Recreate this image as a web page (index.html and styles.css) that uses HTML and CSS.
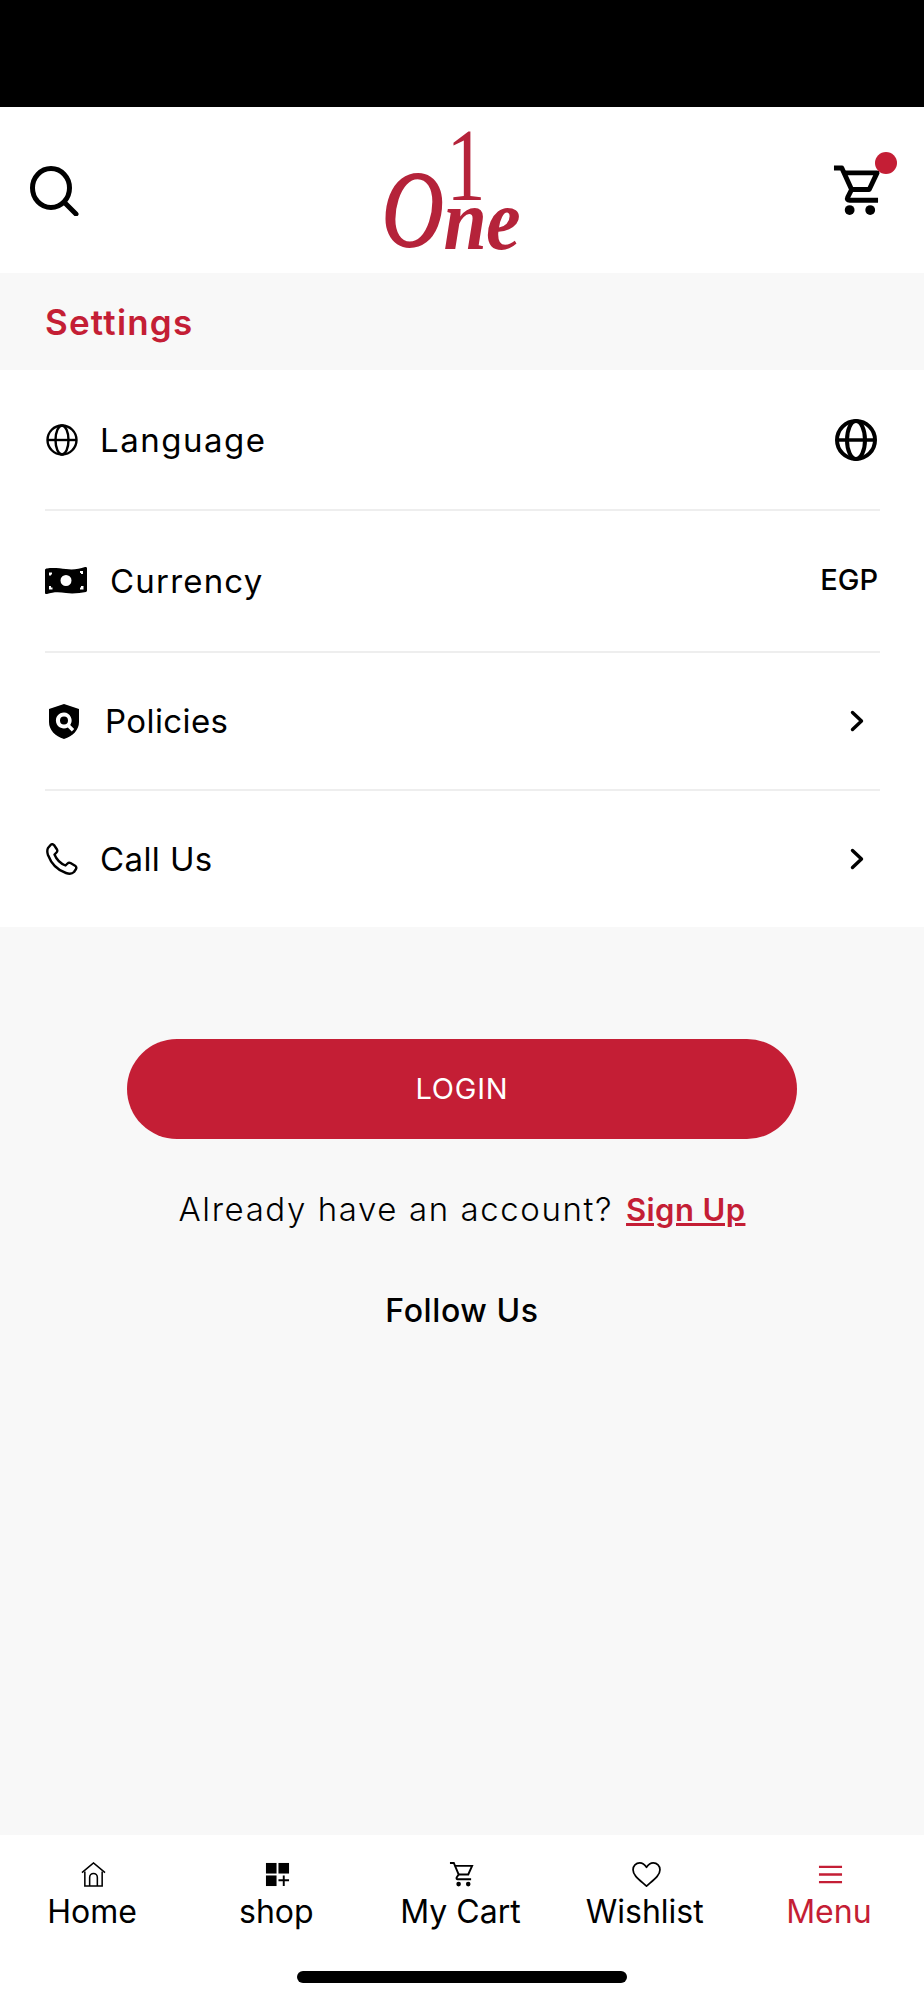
FILE: index.html
```html
<!DOCTYPE html>
<html lang="en">
<head>
    <meta charset="UTF-8">
    <meta name="viewport" content="width=device-width, initial-scale=1.0">
    <title>Settings</title>
    <link rel="stylesheet" href="styles.css">
</head>
<body>

<div class="page">
    <div class="status-bar"></div>

    <!-- top header -->
    <header class="top-bar">
        <svg class="search-icon" viewBox="0 0 50 50" fill="none" stroke="#000" stroke-width="5" stroke-linecap="round">
            <ellipse cx="22" cy="22" rx="18.500" ry="19.500"/>
            <path d="M36 37l11 11"/>
        </svg>
        <div class="logo">
            <span class="logo-o">O</span>
            <div class="logo-stack">
                <span class="logo-one">1</span>
                <span class="logo-ne">ne</span>
            </div>
        </div>
        <div class="cart-wrap">
            <svg class="cart-icon" viewBox="0 0 48 52" fill="none" stroke="#000" stroke-width="5" stroke-linejoin="round">
                <path d="M1 3h8l10 22-4 8c-1 2 0 3 2 3h29"/>
                <path d="M11 8h34l-8 17H19"/>
                <circle cx="17" cy="46" r="5" fill="#000" stroke="none"/>
                <circle cx="38" cy="46" r="5" fill="#000" stroke="none"/>
            </svg>
            <span class="cart-badge"></span>
        </div>
    </header>

    <div class="page-title">Settings</div>

    <!-- settings list -->
    <div class="settings-list">
        <div class="row row-language">
            <svg class="row-icon globe-sm" viewBox="0 0 32 32" fill="none" stroke="#000" stroke-width="2.400">
                <circle cx="16" cy="16" r="14.500"/>
                <ellipse cx="16" cy="16" rx="6.500" ry="14.500"/>
                <path d="M1.500 16h29"/>
            </svg>
            <span class="row-label">Language</span>
            <svg class="globe-lg" viewBox="0 0 42 42" fill="none" stroke="#000" stroke-width="4">
                <circle cx="21" cy="21" r="19"/>
                <ellipse cx="21" cy="21" rx="9" ry="19"/>
                <path d="M2 21h38" stroke-width="3.400"/>
            </svg>
        </div>
        <div class="row row-currency">
            <svg class="row-icon money" viewBox="0 0 42 29">
                <path fill-rule="evenodd" d="M2 2.500c6-1 13 0 19 .5 7 1 13 0 19-2 1 0 2 0 2 1v22c0 1 0 1-1 2-6 1-13 2-20 1-7-1-13-1-19 1-1 0-2 0-2-1V4c0-1 1-1.500 2-1.500zM21 9a5.500 5.500 0 1 0 0 11 5.500 5.500 0 0 0 0-11zM4 6.500v3h2v-1h1v-2zM35 5v2h1v1h2V5zM4 20v3.500h3.500v-2H6V20zM36 20v1.500h-1v2h3.500V20z"/>
            </svg>
            <span class="row-label">Currency</span>
            <span class="row-value">EGP</span>
        </div>
        <div class="row row-policies">
            <svg class="row-icon shield" viewBox="0 0 30 35">
                <path fill-rule="evenodd" d="M15 0l15 5v13c0 8-6 14-15 17C6 32 0 26 0 18V5zM15 8.500a8 8 0 1 0 3.800 15l4 4 2.400-2.600-4-3.900A8 8 0 0 0 15 8.500zm0 4a4 4 0 1 1 0 8 4 4 0 0 1 0-8z"/>
            </svg>
            <span class="row-label">Policies</span>
            <svg class="chevron" viewBox="0 0 14 22" fill="none" stroke="#000" stroke-width="3.400" stroke-linecap="round" stroke-linejoin="round">
                <path d="M2.500 2.500l9 8.500-9 8.500"/>
            </svg>
        </div>
        <div class="row row-call">
            <svg class="row-icon phone" viewBox="0 0 32 32" fill="none" stroke="#000" stroke-width="2.400" stroke-linejoin="round">
                <path d="M2 5c-1 2-1 4 0 7 3 8 9 15 18 18 3 1 6 1 8-1l2-3c.5-1 .5-2-.5-3l-5-3c-1-.5-2-.5-3 .5l-2 2c-5-2-9-6-11-11l2-2c1-1 1-2 .5-3L8 2C7 1 6 1 5 1.500z"/>
            </svg>
            <span class="row-label">Call Us</span>
            <svg class="chevron" viewBox="0 0 14 22" fill="none" stroke="#000" stroke-width="3.400" stroke-linecap="round" stroke-linejoin="round">
                <path d="M2.500 2.500l9 8.500-9 8.500"/>
            </svg>
        </div>
    </div>

    <!-- login area -->
    <main class="auth">
        <button class="login-btn">LOGIN</button>
        <p class="signup-line">Already have an account? <a class="signup-link" href="#">Sign Up</a></p>
        <h2 class="follow-title">Follow Us</h2>
    </main>

    <!-- bottom nav -->
    <nav class="bottom-nav">
        <div class="nav-items">
            <div class="nav-item">
                <svg class="nav-icon" viewBox="0 0 26 26" fill="none" stroke="#000" stroke-width="1.600">
                    <path d="M1 11L13 1l12 10"/>
                    <path d="M4 10v15h18V10"/>
                    <path d="M9 25v-9a4 4 0 0 1 8 0v9"/>
                </svg>
                <span>Home</span>
            </div>
            <div class="nav-item">
                <svg class="nav-icon" viewBox="0 0 26 26">
                    <rect x="1" y="1" width="11" height="11"/>
                    <rect x="14" y="1" width="11" height="11"/>
                    <rect x="1" y="14" width="11" height="11"/>
                    <path d="M18.500 14h2v4h4.500v2h-4.500v5h-2v-5H14v-2h4.500z"/>
                </svg>
                <span>shop</span>
            </div>
            <div class="nav-item">
                <svg class="nav-icon" viewBox="0 0 26 26" fill="none" stroke="#000" stroke-width="2">
                    <path d="M1 1h4l5 12-2 3c-.5 1 0 2 1 2h14"/>
                    <path d="M6 4h18l-4 9H10"/>
                    <circle cx="10" cy="23" r="2.400" fill="#000" stroke="none"/>
                    <circle cx="20" cy="23" r="2.400" fill="#000" stroke="none"/>
                </svg>
                <span>My Cart</span>
            </div>
            <div class="nav-item">
                <svg class="nav-icon heart" viewBox="0 0 30 26" fill="none" stroke="#000" stroke-width="1.800" stroke-linejoin="round">
                    <path d="M15 25C7 18 1 14 1 8c0-4 3-7 7-7 3 0 5 1.500 7 4.500C17 2.500 19 1 22 1c4 0 7 3 7 7 0 6-6 10-14 17z"/>
                </svg>
                <span>Wishlist</span>
            </div>
            <div class="nav-item nav-item-active">
                <svg class="nav-icon" viewBox="0 0 26 26" fill="none" stroke="#c41e35" stroke-width="2.400">
                    <path d="M1 5h24M1 13h24M1 21h24"/>
                </svg>
                <span>Menu</span>
            </div>
        </div>
        <div class="home-indicator"></div>
    </nav>
</div>

</body>
</html>
```

FILE: styles.css
```css
* {
    margin: 0;
    padding: 0;
    box-sizing: border-box;
}
body {
    font-family: Inter, "Liberation Sans", sans-serif;
    background-color: #f8f8f8;
    color: #000;
}
.page {
    display: flex;
    flex-direction: column;
    height: 2000px;
}
.status-bar {
    height: 107px;
    background-color: #000;
}

/* header */
.top-bar {
    height: 166px;
    background-color: #fff;
    display: flex;
    align-items: flex-start;
    justify-content: space-between;
    padding: 0 44px 0 30px;
}
.search-icon {
    width: 50px;
    height: 50px;
    margin-top: 59px;
    margin-left: -1px;
}
.logo {
    display: flex;
    align-items: flex-end;
    height: 118px;
    margin-top: 21px;
    margin-left: -14px;
    color: #b5233a;
    font-family: "Liberation Serif", serif;
}
.logo-o {
    width: 62px;
    height: 72px;
    font-size: 109px;
    line-height: 72px;
    font-style: italic;
    -webkit-text-stroke: 2px #b5233a;
    transform: scaleX(0.78);
    transform-origin: left center;
}
.logo-stack {
    width: 73px;
    display: flex;
    flex-direction: column;
    align-items: flex-start;
}
.logo-one {
    height: 70px;
    margin-left: -4px;
    font-size: 104px;
    line-height: 70px;
    transform: scaleX(0.75);
}
.logo-ne {
    height: 46px;
    font-size: 78px;
    line-height: 46px;
    font-style: italic;
    font-weight: bold;
    letter-spacing: -1px;
    transform: scaleY(1.1);
    transform-origin: left bottom;
}
.cart-wrap {
    position: relative;
    width: 47px;
    height: 51px;
    margin-top: 58px;
}
.cart-icon {
    display: block;
    width: 47px;
    height: 51px;
}
.cart-badge {
    position: absolute;
    top: -13px;
    right: -17px;
    width: 22px;
    height: 22px;
    border-radius: 50%;
    background-color: #c41e35;
}

/* title */
.page-title {
    height: 97px;
    display: flex;
    align-items: center;
    padding-left: 45px;
    font-size: 35px;
    font-weight: 600;
    letter-spacing: 1.2px;
    color: #c41e35;
}

/* settings rows */
.settings-list {
    background-color: #fff;
    padding: 0 44px 0 45px;
}
.row {
    display: flex;
    align-items: center;
    border-bottom: 2px solid #eeeeee;
}
.row-language {
    height: 141px;
}
.row-currency {
    height: 142px;
}
.row-policies {
    height: 138px;
}
.row-call {
    height: 136px;
    border-bottom: none;
}
.row-label {
    flex: 1;
    font-size: 33px;
    letter-spacing: 1.5px;
}
.row-currency .row-label {
    letter-spacing: 1.2px;
}
.row-policies .row-label,
.row-call .row-label {
    letter-spacing: 0.4px;
}
.row-value {
    font-size: 29px;
    font-weight: 500;
    margin-right: 2px;
    margin-bottom: 4px;
}
.row-icon {
    flex: none;
}
.globe-sm {
    width: 32px;
    height: 32px;
    margin-left: 1px;
    margin-right: 22px;
}
.globe-lg {
    width: 42px;
    height: 42px;
    margin-right: 3px;
}
.money {
    width: 42px;
    height: 29px;
    margin-right: 23px;
    margin-bottom: 2px;
}
.shield {
    width: 30px;
    height: 35px;
    margin-left: 4px;
    margin-right: 26px;
}
.phone {
    width: 32px;
    height: 32px;
    margin-left: 1px;
    margin-right: 22px;
}
.chevron {
    width: 14px;
    height: 22px;
    margin-right: 16px;
}

/* login */
.auth {
    flex: 1;
    display: flex;
    flex-direction: column;
    align-items: center;
    padding-top: 112px;
}
.login-btn {
    width: 670px;
    height: 100px;
    padding-bottom: 2px;
    border: none;
    border-radius: 50px;
    background-color: #c41e35;
    color: #fff;
    font-family: inherit;
    font-size: 29px;
    letter-spacing: 0.8px;
    cursor: pointer;
}
.signup-line {
    margin-top: 48px;
    font-size: 33px;
    font-weight: 300;
    letter-spacing: 1.6px;
    line-height: 44px;
}
.signup-link {
    margin-left: 2px;
    color: #c41e35;
    font-weight: 600;
    font-size: 31px;
    letter-spacing: 0.4px;
    text-decoration: underline;
}
.follow-title {
    margin-top: 58px;
    font-size: 32px;
    font-weight: 500;
    letter-spacing: 0.6px;
    line-height: 42px;
}

/* bottom nav */
.bottom-nav {
    height: 165px;
    background-color: #fff;
    display: flex;
    flex-direction: column;
    align-items: center;
}
.nav-items {
    width: 100%;
    display: grid;
    grid-template-columns: repeat(5, 1fr);
    padding: 27px 3px 0 0;
}
.nav-item {
    display: flex;
    flex-direction: column;
    align-items: center;
    gap: 3px;
    font-size: 32px;
    line-height: 44px;
}
.nav-icon {
    width: 25px;
    height: 25px;
    margin-left: 3px;
}
.heart {
    width: 29px;
}
.nav-item-active {
    color: #c41e35;
}
.home-indicator {
    width: 330px;
    height: 12px;
    margin-top: 37px;
    border-radius: 6px;
    background-color: #000;
}
```
